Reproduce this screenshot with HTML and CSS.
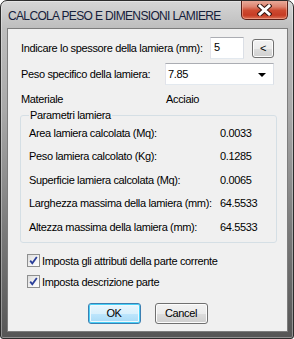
FILE: index.html
```html
<!DOCTYPE html>
<html>
<head>
<meta charset="utf-8">
<link rel="stylesheet" href="styles.css">
</head>
<body>
<div class="window">
  <div class="titlebar">
    <span class="title">CALCOLA PESO E DIMENSIONI LAMIERE</span>
    <div class="close">
      <svg width="15" height="12" viewBox="0 0 15 12">
        <path d="M3 2 L12 10 M12 2 L3 10" stroke="#3a1a14" stroke-width="5" stroke-linecap="square" fill="none"/>
        <path d="M3 2 L12 10 M12 2 L3 10" stroke="#ffffff" stroke-width="3" stroke-linecap="square" fill="none"/>
      </svg>
    </div>
  </div>
  <div class="client">
    <div class="row r1">
      <span class="lbl lbl-1">Indicare lo spessore della lamiera (mm):</span>
      <div class="textbox">5</div>
      <div class="btn small">&lt;</div>
    </div>
    <div class="row r2">
      <span class="lbl lbl-2">Peso specifico della lamiera:</span>
      <div class="combo"><span>7.85</span><span class="arrow"></span></div>
    </div>
    <div class="row r3">
      <span class="lbl lbl-3">Materiale</span><span>Acciaio</span>
    </div>
    <fieldset class="group">
      <legend>Parametri lamiera</legend>
      <div class="grow"><span class="glbl">Area lamiera calcolata (Mq):</span><span>0.0033</span></div>
      <div class="grow"><span class="glbl">Peso lamiera calcolato (Kg):</span><span>0.1285</span></div>
      <div class="grow"><span class="glbl">Superficie lamiera calcolata (Mq):</span><span>0.0065</span></div>
      <div class="grow"><span class="glbl">Larghezza massima della lamiera (mm):</span><span>64.5533</span></div>
      <div class="grow"><span class="glbl">Altezza massima della lamiera (mm):</span><span>64.5533</span></div>
    </fieldset>
    <div class="check c1">
      <span class="box"><svg width="11" height="11" viewBox="0 0 11 11"><path d="M2.2 5.6 L4.3 8.3 L8.8 2" stroke="#2a3f9a" stroke-width="1.8" fill="none"/></svg></span>
      <span>Imposta gli attributi della parte corrente</span>
    </div>
    <div class="check c2">
      <span class="box"><svg width="11" height="11" viewBox="0 0 11 11"><path d="M2.2 5.6 L4.3 8.3 L8.8 2" stroke="#2a3f9a" stroke-width="1.8" fill="none"/></svg></span>
      <span>Imposta descrizione parte</span>
    </div>
    <div class="buttons">
      <div class="btn push default">OK</div>
      <div class="btn push">Cancel</div>
    </div>
  </div>
</div>
</body>
</html>
```
FILE: styles.css
```css
html, body {
  margin: 0;
  padding: 0;
  background: #ffffff;
}
.window {
  width: 294px;
  height: 339px;
  box-sizing: border-box;
  border: 1px solid #2c2c2c;
  border-radius: 7px 7px 3px 3px;
  background: linear-gradient(to bottom, #d6d6d6 0px, #bdbdbd 28px, #a9a9a9 110px, #7a7a7a 230px, #555555 339px);
  box-shadow: inset 0 0 0 1px rgba(255,255,255,0.35);
  padding: 0 5px 6px 6px;
  display: flex;
  flex-direction: column;
  overflow: hidden;
  font-family: "Liberation Sans", Arial, sans-serif;
  font-size: 11px;
  letter-spacing: -0.35px;
  color: #000;
}
.titlebar {
  height: 27px;
  display: flex;
  align-items: center;
  justify-content: space-between;
  flex: none;
}
.title {
  padding-left: 1px;
  font-size: 12px;
  color: #15203a;
  letter-spacing: -0.65px;
  margin-top: 2px;
  white-space: nowrap;
}
.close {
  align-self: flex-start;
  margin-top: -1px;
  width: 47px;
  height: 20px;
  box-sizing: border-box;
  border: 1px solid #5a2018;
  border-top: none;
  border-radius: 0 0 5px 5px;
  background: linear-gradient(to bottom, #eab0a0 0%, #dd8470 35%, #cd4a30 55%, #c63c24 80%, #db7256 100%);
  box-shadow: inset 0 0 0 1px rgba(255,200,180,0.45);
  display: flex;
  align-items: center;
  justify-content: center;
}
.client {
  flex: 1;
  background: #f0f0f0;
  border: 1px solid #7d7d7d;
  padding: 8px 0 0 13px;
  display: flex;
  flex-direction: column;
}
.row {
  display: flex;
  align-items: center;
  white-space: nowrap;
}
.r1 { height: 22px; }
.r2 { height: 22px; margin-top: 4px; }
.r3 { height: 14px; margin-top: 7px; }
.lbl { flex: none; }
.lbl-1 { width: 189px; }
.lbl-2 { width: 144px; }
.lbl-3 { width: 145px; }
.textbox {
  width: 34px;
  height: 22px;
  box-sizing: border-box;
  background: #fff;
  border: 1px solid #e3e9ef;
  border-top-color: #abadb3;
  border-left-color: #e2e3ea;
  border-right-color: #dbdfe6;
  padding: 3px 0 0 3px;
}
.btn {
  box-sizing: border-box;
  border: 1px solid #707070;
  border-radius: 3px;
  background: linear-gradient(to bottom, #f2f2f2 0%, #ebebeb 50%, #dddddd 51%, #cfcfcf 100%);
  box-shadow: inset 0 0 0 1px #fcfcfc;
  display: flex;
  align-items: center;
  justify-content: center;
}
.small {
  width: 22px;
  height: 19px;
  margin-left: 8px;
  font-size: 11px;
}
.combo {
  width: 109px;
  height: 22px;
  box-sizing: border-box;
  background: #fff;
  border: 1px solid #e3e9ef;
  border-top-color: #abadb3;
  border-left-color: #e2e3ea;
  border-right-color: #dbdfe6;
  display: flex;
  align-items: center;
  justify-content: space-between;
  padding: 0 7px 0 2px;
}
.arrow {
  width: 0;
  height: 0;
  border-left: 4px solid transparent;
  border-right: 4px solid transparent;
  border-top: 4px solid #000;
  margin-top: 1px;
}
.group {
  margin: 3px 0 0 -1px;
  width: 257px;
  box-sizing: border-box;
  border: 1px solid #d5dfe5;
  border-radius: 3px;
  padding: 0 0 3px 8px;
}
.group legend {
  padding: 0 1px;
  line-height: 12px;
  margin-left: 0;
}
.grow {
  height: 23.5px;
  display: flex;
  align-items: center;
  white-space: nowrap;
}
.glbl {
  width: 191px;
  flex: none;
}
.check {
  display: flex;
  align-items: center;
  height: 16px;
  margin-left: 6px;
  white-space: nowrap;
}
.c1 { margin-top: 10px; }
.c2 { margin-top: 5px; }
.box {
  width: 13px;
  height: 13px;
  box-sizing: border-box;
  border: 1px solid #8e8f8f;
  background: linear-gradient(135deg, #dcdcdc 0%, #f4f4f4 60%, #ffffff 100%);
  margin-right: 2px;
  display: flex;
  align-items: center;
  justify-content: center;
}
.box svg { display: block; }
.buttons {
  display: flex;
  justify-content: center;
  gap: 14px;
  margin: 13px 0 0 -13px;
}
.push {
  width: 53px;
  height: 21px;
}
.default {
  border-color: #3c7fb1;
  background: linear-gradient(to bottom, #eaf6fd 0%, #d9f0fc 50%, #bee6fd 51%, #a7d9f5 100%);
  box-shadow: inset 0 0 0 1px #48d0f8, inset 0 0 0 2px #f0f8fc;
}
```
